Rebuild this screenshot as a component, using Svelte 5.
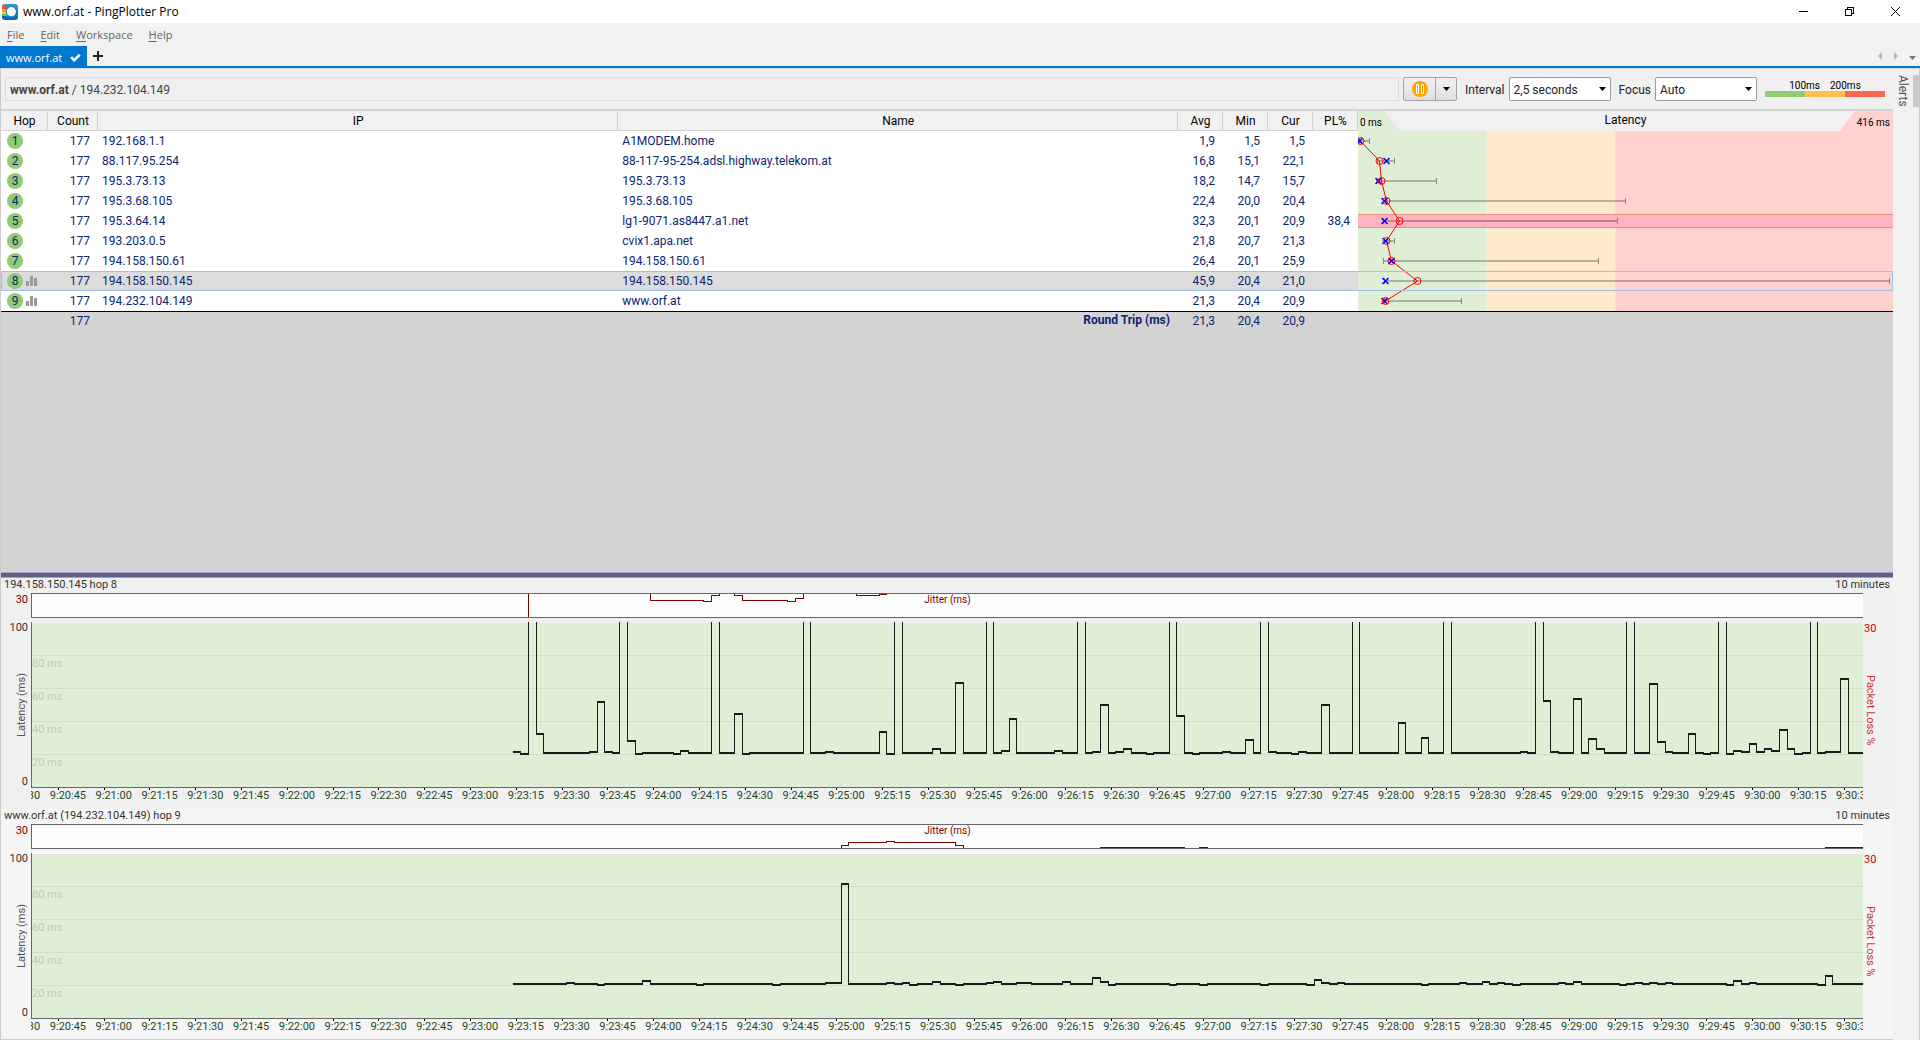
<script>
  const hops = [
    { ip: "192.168.1.1", name: "A1MODEM.home", avg: 1.9, min: 1.5, cur: 1.5, max: 9 },
    { ip: "88.117.95.254", name: "88-117-95-254.adsl.highway.telekom.at", avg: 16.8, min: 15.1, cur: 22.1, max: 28.5 },
    { ip: "195.3.73.13", name: "195.3.73.13", avg: 18.2, min: 14.7, cur: 15.7, max: 61 },
    { ip: "195.3.68.105", name: "195.3.68.105", avg: 22.4, min: 20, cur: 20.4, max: 207.7 },
    { ip: "195.3.64.14", name: "lg1-9071.as8447.a1.net", avg: 32.3, min: 20.1, cur: 20.9, max: 202, loss: 38.4 },
    { ip: "193.203.0.5", name: "cvix1.apa.net", avg: 21.8, min: 20.7, cur: 21.3, max: 28.5 },
    { ip: "194.158.150.61", name: "194.158.150.61", avg: 26.4, min: 20.1, cur: 25.9, max: 186.7 },
    { ip: "194.158.150.145", name: "194.158.150.145", avg: 45.9, min: 20.4, cur: 21, max: 413, graphed: true },
    { ip: "194.232.104.149", name: "www.orf.at", avg: 21.3, min: 20.4, cur: 20.9, max: 80.7, graphed: true }
  ];

  const SAMPLES = 177;
  const WINDOW = 240; // samples in ten minutes, one every 2.5 s
  const SCALE = 416;
  const OVER = 416;
  const A = 20.2, B = 20.7, C = 21.4, D = 22;

  // [first sample, value] pairs, a value holds until the next pair
  const timelines = [
    {
      title: "194.158.150.145 hop 8",
      latency: [
        [0, C], [1, A], [2, OVER], [3, 32.3], [4, B], [10, C], [11, 51.5], [12, C], [13, B], [14, OVER], [15, 27.9],
        [16, A], [17, B], [21, A], [22, D], [23, B], [26, OVER], [27, B], [29, 44.2], [30, A], [31, B], [38, OVER],
        [39, B], [41, C], [42, B], [48, 33.3], [49, A], [50, OVER], [51, B], [55, 23], [56, B], [58, 63], [59, B],
        [62, OVER], [63, B], [64, D], [65, 41.2], [66, B], [71, D], [72, B], [74, OVER], [75, B], [76, C], [77, 49.7],
        [78, B], [79, C], [80, 22.8], [81, B], [83, A], [84, B], [86, OVER], [87, 43], [88, B], [89, A], [90, B],
        [93, C], [94, B], [96, 28.5], [97, B], [98, OVER], [99, C], [100, B], [102, A], [103, C], [104, B], [106, 49.7],
        [107, B], [110, OVER], [111, B], [116, 38.8], [117, B], [119, 29.7], [120, B], [122, OVER], [123, B],
        [132, C], [133, B], [134, OVER], [135, 52.1], [136, C], [137, B], [139, 53.3], [140, B], [141, 29.1],
        [142, 22.8], [143, B], [146, OVER], [147, B], [149, 62.4], [150, 27.3], [151, C], [152, B], [154, 32.1],
        [155, B], [156, A], [157, B], [158, OVER], [159, A], [160, D], [161, C], [162, 26.1], [163, C], [164, 22.8],
        [165, D], [166, 34.5], [167, 22.8], [168, A], [169, B], [170, OVER], [171, B], [172, C], [174, 65.4], [175, B]
      ],
      jitter: [
        [0, 0], [2, OVER], [18, 20.5], [25, 19.4], [26, 27], [27, OVER], [29, 27], [30, 20.5], [36, 19.4],
        [37, 23.2], [38, OVER], [45, 27], [48, 28.4], [49, OVER]
      ]
    },
    {
      title: "www.orf.at (194.232.104.149) hop 9",
      latency: [
        [0, B], [7, C], [8, B], [11, A], [12, B], [17, 22.7], [18, B], [24, A], [25, B], [34, A], [35, B], [41, C],
        [43, 81.2], [44, B], [49, C], [50, B], [51, C], [52, A], [53, B], [55, D], [56, B], [58, A], [59, B], [62, C],
        [63, D], [64, B], [66, C], [68, B], [72, D], [73, B], [76, 24.4], [77, D], [78, A], [79, B], [86, A], [87, B],
        [90, A], [91, B], [98, A], [99, B], [104, A], [105, 23.3], [106, C], [107, B], [108, C], [109, B], [119, A],
        [120, B], [124, C], [125, B], [127, D], [128, B], [129, C], [130, B], [131, A], [132, B], [137, C], [138, B],
        [139, D], [140, B], [145, A], [146, B], [147, C], [148, B], [149, C], [150, B], [151, C], [152, B], [159, A],
        [160, 22.7], [161, B], [162, C], [163, B], [171, A], [172, 25.2], [173, B]
      ],
      jitter: [
        [0, 0], [43, 3.4], [44, 7], [49, 8], [50, 7], [58, 3.4], [59, 0], [77, 1.2], [88, 0], [90, 1.2], [91, 0],
        [172, 1.2]
      ]
    }
  ];

  const times = [];
  for (let s = 20 * 60 + 30; s <= 30 * 60 + 30; s += 15) {
    times.push(`9:${Math.floor(s / 60)}:${String(s % 60).padStart(2, "0")}`);
  }

  const menus = ["File", "Edit", "Workspace", "Help"];

  let plotWidth = $state(1831);
  let traceWidth = $state(535);
  let interval = $state("2,5 seconds");
  let focus = $state("Auto");
  let selected = $state(7);

  const fmt = (v) => (v === undefined ? "" : v.toFixed(1).replace(".", ","));
  const tx = (ms) => Math.floor((ms / SCALE) * traceWidth) + 0.5;
  const ty = (i) => i * 20 + 10;
  const trace = $derived(hops.map((h, i) => `${tx(h.avg)},${ty(i)}`).join(" "));

  function sampleX(i) {
    return Math.round(((WINDOW - SAMPLES + i) / WINDOW) * plotWidth);
  }

  // splits a step line in its flat parts and its risers
  function steps(points, toY) {
    let flat = "";
    let riser = "";
    points.forEach(([start, value], n) => {
      const end = n + 1 < points.length ? points[n + 1][0] : SAMPLES;
      const y = toY(value);
      flat += `M${sampleX(start)} ${y}H${sampleX(end) + 1}`;
      if (n > 0) riser += `M${sampleX(start) + 0.5} ${toY(points[n - 1][1])}V${y}`;
    });
    return { flat, riser };
  }

  const latencyY = (v) => Math.round(165 * (1 - v / 100));
  const jitterY = (v) => Math.floor(23 - v * 0.8) + 0.5;
</script>

<div class="app">
  <header class="titlebar">
    <svg class="logo" width="16" height="16" viewBox="0 0 16 16">
      <defs>
        <linearGradient id="logo-blue" x1="0" y1="0" x2="0" y2="1">
          <stop offset="0" stop-color="#2a9bd6" />
          <stop offset="1" stop-color="#0b66ad" />
        </linearGradient>
      </defs>
      <rect width="16" height="16" rx="3" fill="url(#logo-blue)" />
      <path d="M0 3a3 3 0 0 1 .6-1.500L7 3v2H0z" fill="#e8502e" />
      <path d="M0 5h6v2.500H0z" fill="#f9a12c" />
      <path d="M0 7.500h5v2.500H0z" fill="#e6d43a" />
      <path d="M0 10h6v2H0z" fill="#6cbf5a" />
      <circle cx="9.300" cy="7.700" r="5.600" fill="#1b83c5" />
      <circle cx="9.300" cy="7.700" r="4.600" fill="#fff" />
    </svg>
    <span class="window-title">www.orf.at - PingPlotter Pro</span>
    <div class="window-buttons">
      <button aria-label="Minimize"><svg width="11" height="11" viewBox="0 0 11 11"><path d="M1 5.500h9" /></svg></button>
      <button aria-label="Restore">
        <svg width="11" height="11" viewBox="0 0 11 11"><path d="M1.500 3.500h6v6h-6zM3.500 3.500v-2h6v6h-2" /></svg>
      </button>
      <button aria-label="Close"><svg class="smooth" width="11" height="11" viewBox="0 0 11 11"><path d="M1 1l9 9M10 1l-9 9" /></svg></button>
    </div>
  </header>

  <nav class="menubar">
    {#each menus as menu}
      <button><u>{menu[0]}</u>{menu.slice(1)}</button>
    {/each}
  </nav>

  <div class="tabs">
    <button class="tab">
      www.orf.at
      <svg width="11" height="9" viewBox="0 0 11 9"><path d="M1.200 4.200l3 3L9.800 1.600" fill="none" stroke="#fff" stroke-width="2.600" /></svg>
    </button>
    <button class="new-tab" aria-label="New tab">
      <svg width="10" height="10" viewBox="0 0 10 10"><path d="M0 5h10M5 0v10" stroke="#222" stroke-width="2" /></svg>
    </button>
    <div class="tab-arrows">
      <button aria-label="Scroll left"><svg width="8" height="8" viewBox="0 0 8 8"><path d="M6 0v8L2 4z" fill="#b5b5b5" /></svg></button>
      <button aria-label="Scroll right"><svg width="8" height="8" viewBox="0 0 8 8"><path d="M2 0v8l4-4z" fill="#b5b5b5" /></svg></button>
      <button aria-label="Tab list"><svg width="8" height="8" viewBox="0 0 8 8"><path d="M1 4h7L4.500 8z" fill="#777" /></svg></button>
    </div>
  </div>

  <div class="workspace">
    <main>
      <div class="toolbar">
        <div class="target"><b>www.orf.at</b> / 194.232.104.149</div>
        <div class="split-button">
          <button class="pause" aria-label="Pause">
            <svg width="16" height="16" viewBox="0 0 16 16">
              <circle cx="8" cy="8" r="8" fill="#ffa500" />
              <path d="M4.500 3.500h2v9h-2zM9.500 3.500h2v9h-2z" fill="none" stroke="#fff" />
            </svg>
          </button>
          <button class="more" aria-label="More">
            <svg width="7" height="4" viewBox="0 0 7 4"><path d="M0 0h7L3.500 4z" /></svg>
          </button>
        </div>
        <label for="interval">Interval</label>
        <div class="select">
          <select id="interval" bind:value={interval}>
            <option>2,5 seconds</option>
            <option>5 seconds</option>
            <option>15 seconds</option>
          </select>
          <svg width="7" height="4" viewBox="0 0 7 4"><path d="M0 0h7L3.500 4z" /></svg>
        </div>
        <label for="focus">Focus</label>
        <div class="select">
          <select id="focus" bind:value={focus}>
            <option>Auto</option>
            <option>10 minutes</option>
            <option>1 hour</option>
          </select>
          <svg width="7" height="4" viewBox="0 0 7 4"><path d="M0 0h7L3.500 4z" /></svg>
        </div>
        <div class="legend">
          <div class="legend-text"><span>100ms</span><span>200ms</span></div>
          <div class="legend-bar"><i class="good"></i><i class="warn"></i><i class="bad"></i></div>
        </div>
      </div>

      <div class="hops">
        <table>
          <colgroup>
            <col class="c-hop" /><col class="c-count" /><col class="c-ip" /><col />
            <col class="c-num" /><col class="c-num" /><col class="c-num" /><col class="c-num" /><col class="c-trace" />
          </colgroup>
          <thead>
            <tr>
              <th>Hop</th><th>Count</th><th>IP</th><th>Name</th><th>Avg</th><th>Min</th><th>Cur</th><th>PL%</th>
              <th class="trace-head">
                <div>
                  <span class="from">0 ms</span>
                  <span>Latency</span>
                  <span class="to">{SCALE} ms</span>
                </div>
              </th>
            </tr>
          </thead>
          <tbody>
            {#each hops as hop, i}
              <tr class:selected={selected === i} onclick={() => (selected = i)}>
                <td class="hop">
                  <div>
                    <span class="badge">{i + 1}</span>
                    {#if hop.graphed}
                      <svg width="11" height="10" viewBox="0 0 11 10"><path d="M0 5h3v5H0zM4 0h3v10H4zM8 2h3v8H8z" fill="#999" /></svg>
                    {/if}
                  </div>
                </td>
                <td class="num">{SAMPLES}</td>
                <td>{hop.ip}</td>
                <td>{hop.name}</td>
                <td class="num">{fmt(hop.avg)}</td>
                <td class="num">{fmt(hop.min)}</td>
                <td class="num">{fmt(hop.cur)}</td>
                <td class="num">{fmt(hop.loss)}</td>
                {#if i === 0}
                  <td class="trace" rowspan={hops.length}>
                    <div bind:clientWidth={traceWidth}>
                      <svg width={traceWidth} height="180">
                        <rect width={(traceWidth * 100) / SCALE} height="180" fill="#dfefd6" />
                        <rect x={(traceWidth * 100) / SCALE} width={(traceWidth * 100) / SCALE} height="180" fill="#ffeacc" />
                        <rect x={(traceWidth * 200) / SCALE} width={traceWidth} height="180" fill="#ffd1ce" />
                        {#each hops as h, n}
                          {#if h.loss}
                            <rect x="-1" y={ty(n) - 6.5} width={traceWidth + 2} height="13" fill="#ffb3c0" stroke="#e8917c" />
                          {/if}
                          <path class="range" d="M{tx(h.min)} {ty(n)}H{tx(h.max)}" />
                          <path class="range-end" d="M{tx(h.min)} {ty(n) - 3}v6M{tx(h.max)} {ty(n) - 3}v6" />
                        {/each}
                        <polyline points={trace} />
                        {#each hops as h, n}
                          <path class="cur" d="M{tx(h.cur) - 3} {ty(n) - 3}l6 6m0 -6l-6 6" />
                          <circle cx={tx(h.avg)} cy={ty(n)} r="3.5" />
                        {/each}
                      </svg>
                    </div>
                  </td>
                {/if}
              </tr>
            {/each}
          </tbody>
          <tfoot>
            <tr>
              <td></td><td class="num">{SAMPLES}</td><td></td>
              <th scope="row">Round Trip (ms)</th>
              <td class="num">21,3</td><td class="num">20,4</td><td class="num">20,9</td><td></td><td></td>
            </tr>
          </tfoot>
        </table>
      </div>

      <div class="splitter"></div>

      {#each timelines as line}
        {@const lat = steps(line.latency, latencyY)}
        {@const jit = steps(line.jitter, jitterY)}
        <section class="timeline">
          <div class="caption"><span>{line.title}</span><span>10 minutes</span></div>
          <div class="jitter-max">30</div>
          <div class="jitter">
            <svg width={plotWidth} height="23">
              <path d={jit.flat + jit.riser} fill="none" stroke="#7b0000" shape-rendering="crispEdges" />
            </svg>
            <span>Jitter (ms)</span>
          </div>
          <div class="y-axis">
            <span>100</span>
            <span class="y-title">Latency (ms)</span>
            <span>0</span>
          </div>
          <div class="plot">
            <div bind:clientWidth={plotWidth}>
              <svg width={plotWidth} height="165" shape-rendering="crispEdges">
                <rect y="1" width={plotWidth} height="164" fill="#dfefd6" />
                {#each [80, 60, 40, 20] as ms}
                  <path d="M0 {165 - ms * 1.65 + 0.5}H{plotWidth}" stroke="#cddfc4" />
                  <text x="0" y={165 - ms * 1.65 + 12}>{ms} ms</text>
                {/each}
                <path d={lat.flat} stroke="#1a1a1a" stroke-width="2" />
                <path d={lat.riser} stroke="#1a1a1a" />
              </svg>
            </div>
          </div>
          <div class="loss-axis">
            <span>30</span>
            <span class="loss-title">Packet Loss %</span>
          </div>
          <div class="x-axis">
            <div>
              {#each times as time}
                <span>{time}</span>
              {/each}
            </div>
          </div>
        </section>
      {/each}
    </main>

    <aside>
      <button>Alerts</button>
      <div class="thumb"></div>
    </aside>
  </div>
</div>

<style>
  :global(body) {
    background: #f1f1f1;
  }

  .app {
    display: flex;
    flex-direction: column;
    min-height: 100vh;
    background: #f1f1f1;
    color: #000;
    font: 12px/16px Roboto, sans-serif;
  }

  button {
    padding: 0;
    border: 0;
    background: none;
    color: inherit;
    font: inherit;
  }

  svg {
    display: block;
  }

  .titlebar {
    display: flex;
    align-items: center;
    gap: 5px;
    height: 23px;
    padding-left: 2px;
    background: #fff;
  }

  .titlebar,
  .menubar,
  .tab {
    font-family: "Open Sans", sans-serif;
    font-size: 11px;
  }

  .titlebar {
    font-size: 12px;
  }

  .window-title {
    flex: 1;
  }

  .window-buttons {
    display: flex;
    padding-right: 2px;

    & button {
      display: grid;
      place-items: center;
      width: 46px;
      height: 20px;
    }

    & svg {
      fill: none;
      stroke: #000;
      shape-rendering: crispEdges;
    }

    & .smooth {
      shape-rendering: auto;
    }
  }

  .menubar {
    display: flex;
    gap: 16px;
    height: 23px;
    padding-left: 7px;
    color: #666;

    & u {
      text-underline-offset: 2px;
    }
  }

  .tabs {
    display: flex;
    align-items: stretch;
    height: 20px;
    border-bottom: 2px solid #0078d0;
  }

  .tab {
    display: flex;
    align-items: center;
    gap: 8px;
    padding: 3px 6px 0;
    background: #0078d0;
    color: #fff;
  }

  .new-tab {
    padding: 0 6px;
  }

  .tab-arrows {
    display: flex;
    gap: 8px;
    margin-left: auto;
    padding-right: 4px;
  }

  .workspace {
    display: flex;
    flex: 1;
    border-left: 1px solid #ccc;
  }

  main {
    display: flex;
    flex: 1;
    flex-direction: column;
    min-width: 0;
  }

  .toolbar {
    display: flex;
    align-items: center;
    height: 40px;
    border-top: 1px solid #d6d6d6;
    border-bottom: 2px solid #d3d3d3;
    padding: 0 8px 0 4px;
    background: #f0f0f0;

    & label {
      margin: 0 4px 0 8px;
      padding-top: 1px;
      color: #222;
    }
  }

  .target {
    flex: 1;
    margin-right: 4px;
    padding: 4px 4px 2px;
    border: 1px solid #ddd;
    background: #efefef;
    color: #444;
  }

  .split-button {
    display: flex;
    box-sizing: border-box;
    height: 24px;
    border: 1px solid #a3a3a3;
    border-radius: 2px;
    background: linear-gradient(#f2f2f2, #dedede);

    & button {
      display: grid;
      place-items: center;
    }
  }

  .pause {
    width: 31px;
  }

  .split-button .more {
    width: 21px;
    border-left: 1px solid #a3a3a3;
  }

  .select {
    position: relative;

    & select {
      appearance: none;
      display: block;
      width: 102px;
      height: 24px;
      padding: 1px 4px 0;
      border: 1px solid #999;
      border-radius: 2px;
      background: #fff;
      color: #222;
      font: inherit;
    }

    & svg {
      position: absolute;
      top: 10px;
      right: 5px;
      pointer-events: none;
    }
  }

  .legend {
    width: 120px;
    margin-left: 8px;
    padding-bottom: 2px;
    font-size: 10px;
    line-height: 11px;
  }

  .legend-text {
    display: flex;
    justify-content: center;
    gap: 10px;
  }

  .legend-bar {
    display: flex;
    height: 6px;

    & i {
      flex: 1;
    }

    & .good {
      background: #90cc72;
    }

    & .warn {
      background: #ffc04d;
    }

    & .bad {
      background: #ff6650;
    }
  }

  .hops {
    flex: 1;
    background: #d3d3d3;
  }

  table {
    width: 100%;
    table-layout: fixed;
    border-spacing: 0;
    color: #0d2470;
  }

  .c-hop {
    width: 47px;
  }

  .c-count {
    width: 50px;
  }

  .c-ip {
    width: 27.5%;
  }

  .c-num {
    width: 45px;
  }

  .c-trace {
    width: 535px;
  }

  thead th {
    height: 20px;
    padding: 0;
    background: #f1f1f1;
    box-shadow: inset -1px -1px #d3d3d3;
    color: #000;
    font-weight: normal;
  }

  thead .trace-head {
    box-shadow: none;

    & div {
      display: flex;
      justify-content: space-between;
      line-height: 18px;
    }

    & .from,
    & .to {
      box-sizing: border-box;
      width: 53px;
      height: 20px;
      font-size: 10px;
      line-height: 24px;
    }

    & .from {
      padding-left: 2px;
      background: #dfefd6;
      clip-path: polygon(0 0, 27px 0, 42px 100%, 0 100%);
      text-align: left;
    }

    & .to {
      padding-right: 3px;
      background: #ffd1ce;
      clip-path: polygon(15px 0, 100% 0, 100% 100%, 0 100%);
      text-align: right;
    }
  }

  tbody tr {
    background: #fff;
  }

  tbody tr.selected {
    background: #dcdcdc;
    outline: 1px solid #a4bfe6;
    outline-offset: -1px;
  }

  td {
    height: 19px;
    padding: 1px 4px 0;
    line-height: 19px;
  }

  .num {
    padding-right: 8px;
    text-align: right;
  }

  .hop {
    padding-top: 0;

    & div {
      display: flex;
      align-items: center;
      gap: 3px;
      padding-left: 2px;
    }
  }

  .badge {
    width: 16px;
    height: 16px;
    border-radius: 50%;
    background: #90cc72;
    line-height: 17px;
    text-align: center;
  }

  .trace {
    padding: 0;

    & path {
      fill: none;
    }

    & .range {
      stroke: #000;
      stroke-opacity: 0.25;
      stroke-width: 2;
    }

    & .range-end {
      stroke: #888;
    }

    & polyline,
    & circle {
      fill: none;
      stroke: #f00;
    }

    & .cur {
      stroke: #00f;
      stroke-width: 1.5;
    }
  }

  tfoot {
    & td,
    & th {
      height: 17px;
      border-top: 1px solid #000;
      padding-top: 0;
      line-height: 17px;
    }

    & th {
      padding-right: 8px;
      text-align: right;
    }
  }

  .splitter {
    height: 4px;
    border: 1px solid #a5a4bd;
    border-width: 1px 0;
    background: #605f8a;
  }

  .timeline {
    display: grid;
    grid-template-columns: 30px minmax(0, 1fr) 30px;
    grid-template-rows: 15px 25px 4px 166px 1fr;
    box-sizing: border-box;
    height: 231px;
    background: #f0f0f0;
    color: #333;
    font-size: 11px;
    line-height: 12px;

    &:last-child {
      border-bottom: 1px solid #ccc;
      background: #f5f5f5;
    }
  }

  .caption {
    display: flex;
    grid-column: 1 / -1;
    justify-content: space-between;
    padding: 0 3px;
    line-height: 14px;
  }

  .jitter-max {
    padding: 1px 3px 0 0;
    color: #7b0000;
    text-align: right;
  }

  .jitter {
    position: relative;
    grid-column: 2;
    border: 1px solid #666;
    border-right: 0;
    background: #fdfdfd;

    & svg {
      width: 100%;
    }

    & span {
      position: absolute;
      inset: 0;
      color: #7b0000;
      font-size: 10px;
      text-align: center;
    }
  }

  .y-axis {
    display: flex;
    grid-row: 4;
    flex-direction: column;
    align-items: flex-end;
    justify-content: space-between;
    padding-right: 3px;
  }

  .y-title {
    color: #555;
    writing-mode: vertical-rl;
    transform: rotate(180deg);
  }

  .plot {
    grid-row: 4;
    grid-column: 2;
    border-left: 1px solid #666;
    border-bottom: 1px solid #666;

    & text {
      fill: #bccdb4;
    }
  }

  .loss-axis {
    display: flex;
    grid-row: 4;
    grid-column: 3;
    flex-direction: column;
    align-items: flex-start;
    gap: 40px;
    padding: 1px 0 0 1px;
    color: #c00;
  }

  .loss-title {
    color: #c8382c;
    writing-mode: vertical-rl;
  }

  .x-axis {
    grid-row: 5;
    grid-column: 2;
    overflow: hidden;
    color: #1c4a1c;

    & div {
      display: flex;
      justify-content: space-between;
      width: 100%;
      margin-left: -27px;
    }

    & span {
      flex: none;
      width: 0;
      white-space: nowrap;
    }

    & span::before {
      content: "";
      display: block;
      width: 1px;
      height: 2px;
      margin-left: 8px;
      background: #000;
    }
  }

  aside {
    display: flex;
    justify-content: space-between;
    box-sizing: border-box;
    width: 27px;
    border-top: 1px solid #d6d6d6;
    box-shadow: inset -1px 0 #ccc;

    & button {
      align-self: flex-start;
      padding: 6px 2px;
      color: #555;
      writing-mode: vertical-rl;
    }
  }

  .thumb {
    width: 7px;
    height: 32px;
    margin-top: 6px;
    background: #c8c8c8;
  }
</style>
